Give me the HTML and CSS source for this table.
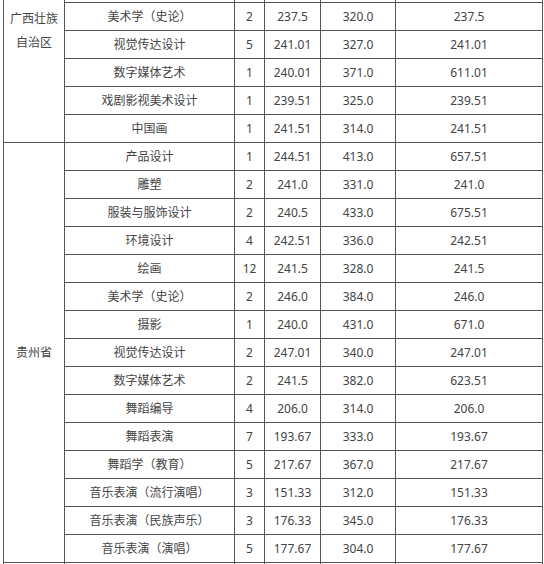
FILE: index.html
```html
<!DOCTYPE html>
<html lang="zh-CN">
<head>
<meta charset="utf-8">
<title>录取分数</title>
<link rel="stylesheet" href="styles.css">
</head>
<body>
<table class="scores">
  <colgroup>
    <col class="c-prov"><col class="c-major"><col class="c-num"><col class="c-s1"><col class="c-s2"><col class="c-s3">
  </colgroup>
  <tbody>
    <tr><td class="prov" rowspan="8">广西壮族自治区</td><td>&nbsp;</td><td></td><td></td><td></td><td></td></tr>
    <tr><td>&nbsp;</td><td></td><td></td><td></td><td></td></tr>
    <tr><td>&nbsp;</td><td></td><td></td><td></td><td></td></tr>
    <tr><td>美术学（史论）</td><td>2</td><td>237.5</td><td>320.0</td><td>237.5</td></tr>
    <tr><td>视觉传达设计</td><td>5</td><td>241.01</td><td>327.0</td><td>241.01</td></tr>
    <tr><td>数字媒体艺术</td><td>1</td><td>240.01</td><td>371.0</td><td>611.01</td></tr>
    <tr><td>戏剧影视美术设计</td><td>1</td><td>239.51</td><td>325.0</td><td>239.51</td></tr>
    <tr><td>中国画</td><td>1</td><td>241.51</td><td>314.0</td><td>241.51</td></tr>
    <tr><td class="prov" rowspan="15">贵州省</td><td>产品设计</td><td>1</td><td>244.51</td><td>413.0</td><td>657.51</td></tr>
    <tr><td>雕塑</td><td>2</td><td>241.0</td><td>331.0</td><td>241.0</td></tr>
    <tr><td>服装与服饰设计</td><td>2</td><td>240.5</td><td>433.0</td><td>675.51</td></tr>
    <tr><td>环境设计</td><td>4</td><td>242.51</td><td>336.0</td><td>242.51</td></tr>
    <tr><td>绘画</td><td>12</td><td>241.5</td><td>328.0</td><td>241.5</td></tr>
    <tr><td>美术学（史论）</td><td>2</td><td>246.0</td><td>384.0</td><td>246.0</td></tr>
    <tr><td>摄影</td><td>1</td><td>240.0</td><td>431.0</td><td>671.0</td></tr>
    <tr><td>视觉传达设计</td><td>2</td><td>247.01</td><td>340.0</td><td>247.01</td></tr>
    <tr><td>数字媒体艺术</td><td>2</td><td>241.5</td><td>382.0</td><td>623.51</td></tr>
    <tr><td>舞蹈编导</td><td>4</td><td>206.0</td><td>314.0</td><td>206.0</td></tr>
    <tr><td>舞蹈表演</td><td>7</td><td>193.67</td><td>333.0</td><td>193.67</td></tr>
    <tr><td>舞蹈学（教育）</td><td>5</td><td>217.67</td><td>367.0</td><td>217.67</td></tr>
    <tr><td>音乐表演（流行演唱）</td><td>3</td><td>151.33</td><td>312.0</td><td>151.33</td></tr>
    <tr><td>音乐表演（民族声乐）</td><td>3</td><td>176.33</td><td>345.0</td><td>176.33</td></tr>
    <tr><td>音乐表演（演唱）</td><td>5</td><td>177.67</td><td>304.0</td><td>177.67</td></tr>
    <tr><td>&nbsp;</td><td>&nbsp;</td><td></td><td></td><td></td><td></td></tr>
  </tbody>
</table>
</body>
</html>
```

FILE: styles.css
```css
html, body {
  margin: 0;
  padding: 0;
  background: #ffffff;
}

body {
  overflow: hidden;
}

.scores {
  border-collapse: collapse;
  table-layout: fixed;
  width: 540px;
  margin: -82px 0 0 3px;
  font-family: "Noto Sans", "Noto Sans CJK SC", sans-serif;
  font-size: 12px;
  color: #444444;
}

.c-prov { width: 61px; }
.c-major { width: 170px; }
.c-num { width: 30px; }
.c-s1 { width: 56px; }
.c-s2 { width: 75px; }
.c-s3 { width: 147px; }

.scores td {
  border: 1px solid #555555;
  height: 28px;
  padding: 0;
  box-sizing: border-box;
  text-align: center;
  vertical-align: middle;
  line-height: 16px;
  white-space: nowrap;
}

.scores td.prov {
  white-space: normal;
  padding: 0 6px;
  line-height: 24px;
}
```
